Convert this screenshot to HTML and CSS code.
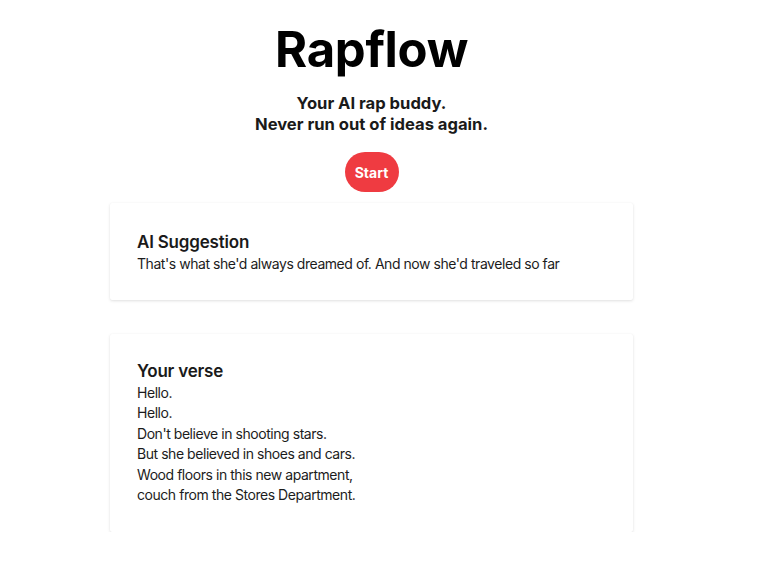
FILE: index.html
```html
<!DOCTYPE html>
<html>
<head>
<meta charset="utf-8">
<link rel="stylesheet" href="styles.css">
</head>
<body>
<div class="page">
  <h1 class="title">Rapflow</h1>
  <p class="tagline">Your AI rap buddy.<br>Never run out of ideas again.</p>
  <button class="start">Start</button>
  <section class="card card-suggestion">
    <h3 class="card-title">AI Suggestion</h3>
    <p class="card-text">That's what she'd always dreamed of. And now she'd traveled so far</p>
  </section>
  <section class="card card-verse">
    <h3 class="card-title">Your verse</h3>
    <p class="card-text">Hello.<br>Hello.<br>Don't believe in shooting stars.<br>But she believed in shoes and cars.<br>Wood floors in this new apartment,<br>couch from the Stores Department.</p>
  </section>
</div>
</body>
</html>
```
FILE: styles.css
```css
html, body {
  margin: 0;
  padding: 0;
  background: #ffffff;
}
body {
  font-family: Inter, "Noto Sans", sans-serif;
  color: #1c1c1c;
}
.page {
  width: 743px;
  padding-top: 22px;
  display: flex;
  flex-direction: column;
  align-items: center;
}
.title {
  margin: 0;
  font-size: 49px;
  line-height: 56px;
  font-weight: 700;
  color: #000;
  letter-spacing: -0.3px;
}
.tagline {
  margin: 15px 0 0;
  font-size: 16.6px;
  line-height: 21px;
  font-weight: 700;
  text-align: center;
  color: #1a1a1a;
}
.start {
  margin-top: 17px;
  height: 40px;
  width: 54px;
  border: none;
  border-radius: 20px;
  background: #ef3b41;
  color: #fff;
  font-family: Inter, "Noto Sans", sans-serif;
  font-size: 14px;
  font-weight: 700;
  padding: 0;
}
.card {
  box-sizing: border-box;
  width: 523px;
  background: #fff;
  box-shadow: 0 1px 3px rgba(0,0,0,0.12), 0 0 1px rgba(0,0,0,0.05);
  padding: 27px 27px 25px;
  border-radius: 2px;
}
.card-suggestion {
  margin-top: 11px;
}
.card-verse {
  margin-top: 34px;
  padding-top: 25px;
  padding-bottom: 26px;
}
.card-title {
  margin: 0;
  font-size: 17px;
  line-height: 24px;
  font-weight: 600;
  color: #1a1a1a;
  letter-spacing: -0.2px;
}
.card-text {
  margin: 0;
  font-size: 14px;
  line-height: 20.5px;
  color: #1c1c1c;
  letter-spacing: -0.45px;
}
```
